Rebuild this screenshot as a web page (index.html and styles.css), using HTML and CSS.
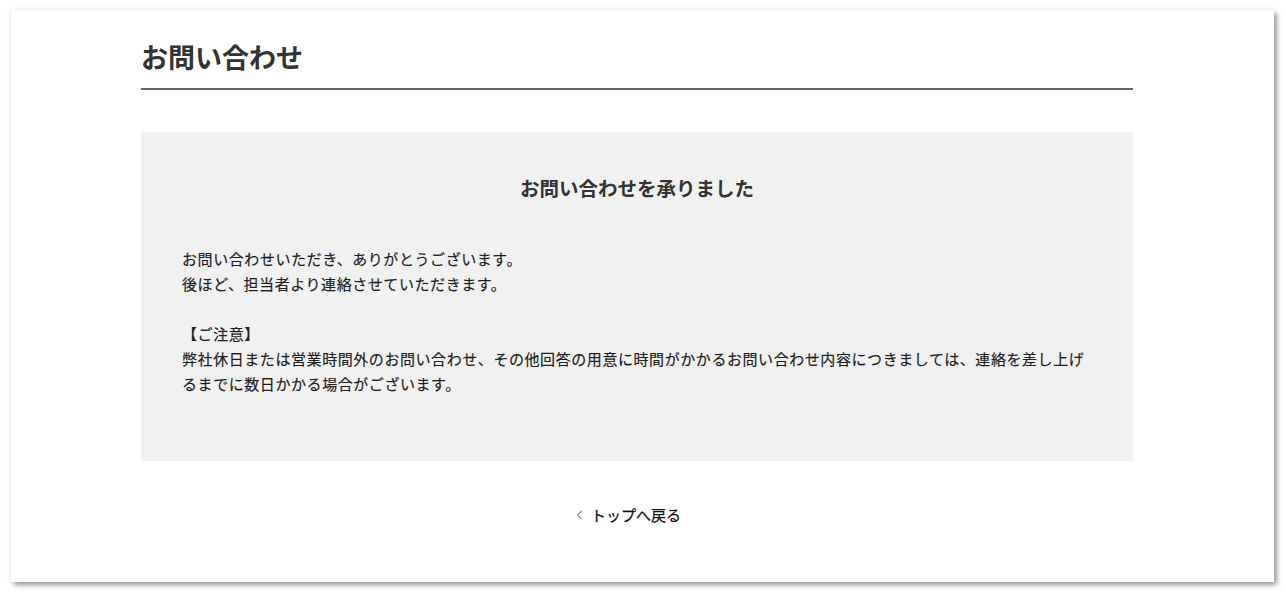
FILE: index.html
```html
<!DOCTYPE html>
<html lang="ja">
<head>
<meta charset="utf-8">
<title>お問い合わせ</title>
<link rel="stylesheet" href="styles.css">
</head>
<body>
<div class="page">
  <main class="card">
    <div class="content">
      <h1 class="title">お問い合わせ</h1>
      <section class="notice">
        <h2 class="notice-title">お問い合わせを承りました</h2>
        <div class="notice-body">
          <p>お問い合わせいただき、ありがとうございます。<br>後ほど、担当者より連絡させていただきます。</p>
          <p>【ご注意】<br>弊社休日または営業時間外のお問い合わせ、その他回答の用意に時間がかかるお問い合わせ内容につきましては、連絡を差し上げるまでに数日かかる場合がございます。</p>
        </div>
      </section>
      <div class="back">
        <a class="back-link" href="#">
          <svg class="chev" width="7" height="10" viewBox="0 0 7 10"><polyline points="5.5,1 1.5,5 5.5,9" fill="none" stroke="#888" stroke-width="1.1"/></svg>
          <span>トップへ戻る</span>
        </a>
      </div>
    </div>
  </main>
</div>
</body>
</html>
```
FILE: styles.css
```css
html, body {
  margin: 0;
  padding: 0;
  background: #ffffff;
}
body {
  font-family: "Noto Sans CJK JP", "Noto Sans", sans-serif;
  color: #333;
}
.page {
  padding: 10px 12px 16px 11px;
}
.card {
  display: block;
  background: #fff;
  height: 572px;
  box-sizing: border-box;
  box-shadow: 3px 3px 5px rgba(0,0,0,0.38), 0 0 6px rgba(0,0,0,0.08);
  padding: 27px 0 0 130px;
}
.content {
  width: 992px;
}
.title {
  margin: 0;
  font-size: 27px;
  line-height: 40px;
  font-weight: 700;
  color: #333;
  padding-bottom: 11px;
  border-bottom: 2px solid #666;
}
.notice {
  margin-top: 42px;
  background: #f1f1f1;
  height: 329px;
  box-sizing: border-box;
  padding: 41px 0 0 41px;
}
.notice-title {
  margin: 0 0 0 -41px;
  text-align: center;
  font-size: 19.5px;
  line-height: 30px;
  font-weight: 700;
  color: #333;
}
.notice-body {
  margin-top: 43px;
  width: 912px;
  font-size: 15px;
  line-height: 25px;
  letter-spacing: 0.57px;
  font-weight: 400;
  color: #1e1e1e;
  -webkit-text-stroke: 0.18px #1e1e1e;
}
.notice-body p {
  margin: 0 0 25px 0;
}
.back {
  margin-top: 41px;
  display: flex;
  justify-content: center;
  padding-right: 17px;
}
.back-link {
  display: flex;
  align-items: center;
  gap: 8px;
  text-decoration: none;
  color: #111;
  font-size: 15px;
  line-height: 25px;
  font-weight: 400;
  -webkit-text-stroke: 0.25px #111;
}
.chev {
  display: block;
}
```
